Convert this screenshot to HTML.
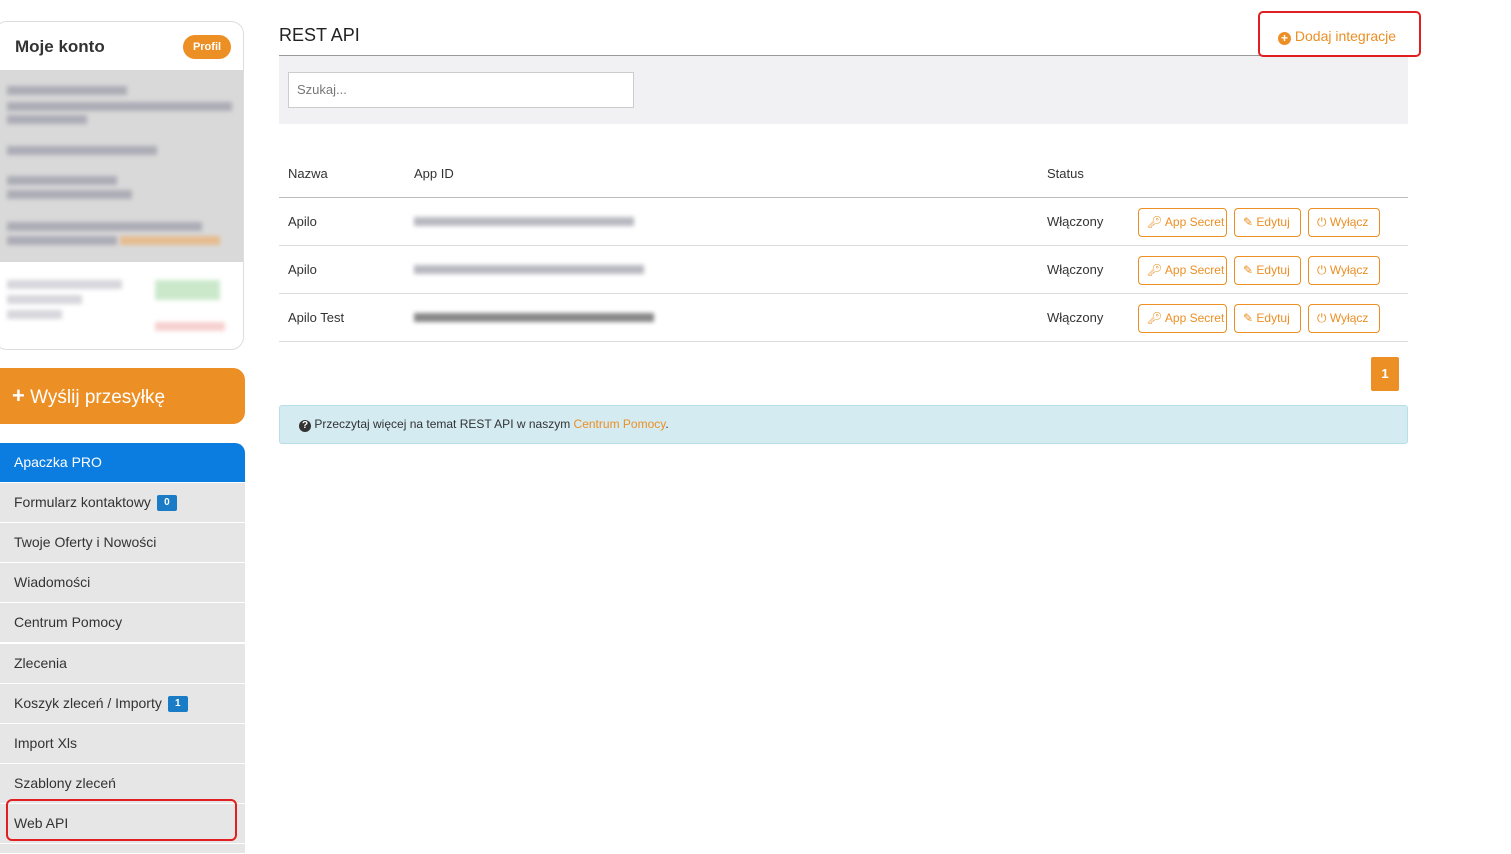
<!DOCTYPE html>
<html><head><meta charset="utf-8"><style>
*{box-sizing:border-box;margin:0;padding:0}
body{width:1511px;height:853px;background:#fff;font-family:"Liberation Sans",sans-serif;position:relative;overflow:hidden;color:#333}
.card{position:absolute;left:-6px;top:21px;width:250px;height:329px;border:1px solid #ddd;border-radius:13px;background:#fff;overflow:hidden}
.card h2{position:absolute;left:20px;top:15px;font-size:17px;font-weight:bold;color:#333}
.prof{position:absolute;left:188px;top:13px;width:48px;height:24px;border-radius:12px;background:#ec8f24;color:#fff;font-size:11px;font-weight:bold;text-align:center;line-height:24px}
.gray{position:absolute;left:0;top:48px;width:250px;height:192px;background:#d9d9d9}
.bar{position:absolute;height:9px;background:#9a9aa8;filter:blur(2px);opacity:.7}
.menu{position:absolute;left:0;width:245px;font-size:14px;color:#333}
.mi{height:40px;line-height:39px;padding-left:14px;background:#e6e6e6;border-bottom:1px solid #fff}
.badge{display:inline-block;background:#1a7cc7;color:#fff;font-size:10px;font-weight:bold;width:20px;height:16px;line-height:16px;text-align:center;border-radius:2px;margin-left:6px;vertical-align:middle}
.btn{position:absolute;height:29px;border:1px solid #ec8f24;border-radius:4px;color:#ec8f24;font-size:12px;line-height:27px;padding-left:8px;background:#fff;white-space:nowrap;overflow:hidden}
.row{position:absolute;left:279px;width:1129px;height:48px;border-bottom:1px solid #ddd;font-size:13px}
.row span{position:absolute;top:16px}
</style></head><body>
<div class="card">
<h2>Moje konto</h2><div class="prof">Profil</div>
<div class="gray">
<div class="bar" style="left:12px;top:16px;width:120px"></div>
<div class="bar" style="left:12px;top:32px;width:225px"></div>
<div class="bar" style="left:12px;top:45px;width:80px"></div>
<div class="bar" style="left:12px;top:76px;width:150px"></div>
<div class="bar" style="left:12px;top:106px;width:110px"></div>
<div class="bar" style="left:12px;top:120px;width:125px"></div>
<div class="bar" style="left:12px;top:152px;width:195px"></div>
<div class="bar" style="left:12px;top:166px;width:110px"></div>
<div class="bar" style="left:125px;top:166px;width:100px;background:#ecb070"></div>
</div>
<div class="bar" style="left:12px;top:258px;width:115px;opacity:.4"></div>
<div class="bar" style="left:12px;top:273px;width:75px;opacity:.4"></div>
<div class="bar" style="left:12px;top:288px;width:55px;opacity:.4"></div>
<div class="bar" style="left:160px;top:258px;width:65px;height:20px;background:#bfe3bf;opacity:.8"></div>
<div class="bar" style="left:160px;top:300px;width:70px;background:#f5c4c4;opacity:.8"></div>
</div>
<div style="position:absolute;left:0;top:368px;width:245px;height:56px;background:#ec8f24;border-radius:0 12px 12px 0;color:#fff;font-size:19px;line-height:56px;padding-left:12px"><b style="font-size:22px">+</b> Wyślij przesyłkę</div>
<div class="menu" style="top:443px">
<div class="mi" style="background:#0c7de0;color:#fff;border-radius:0 10px 0 0">Apaczka PRO</div>
<div class="mi">Formularz kontaktowy<span class="badge">0</span></div>
<div class="mi">Twoje Oferty i Nowości</div>
<div class="mi">Wiadomości</div>
<div class="mi">Centrum Pomocy</div>
</div>
<div class="menu" style="top:644px">
<div class="mi">Zlecenia</div>
<div class="mi">Koszyk zleceń / Importy<span class="badge">1</span></div>
<div class="mi">Import Xls</div>
<div class="mi">Szablony zleceń</div>
<div class="mi">Web API</div>
<div class="mi" style="height:10px"></div>
</div>
<div style="position:absolute;left:6px;top:799px;width:231px;height:42px;border:2px solid #e02020;border-radius:6px"></div>

<div style="position:absolute;left:279px;top:25px;font-size:18px;color:#222">REST API</div>
<div style="position:absolute;left:279px;top:55px;width:1129px;height:1px;background:#999"></div>
<div style="position:absolute;left:279px;top:56px;width:1129px;height:68px;background:#f1f1f3"></div>
<div style="position:absolute;left:1258px;top:11px;width:163px;height:46px;border:2px solid #e02020;border-radius:5px;background:#fff;color:#ec8f24;font-size:14px;line-height:46px;padding-left:18px"><span style="display:inline-block;width:13px;height:13px;border-radius:50%;background:#ec8f24;color:#fff;font-size:12px;line-height:13px;text-align:center;font-weight:bold;vertical-align:-1px">+</span> Dodaj integracje</div>
<div style="position:absolute;left:288px;top:72px;width:346px;height:36px;border:1px solid #ccc;background:#fff;font-size:13px;color:#777;line-height:34px;padding-left:8px">Szukaj...</div>
<div class="row" style="top:150px"><span style="left:9px">Nazwa</span><span style="left:135px">App ID</span><span style="left:768px">Status</span></div>
<div style="position:absolute;left:279px;top:197px;width:1129px;height:1px;background:#bbb"></div>
<div class="row" style="top:198px"><span style="left:9px">Apilo</span><span style="left:768px">Włączony</span><div class="bar" style="left:135px;top:19px;width:220px"></div></div>
<div class="row" style="top:246px"><span style="left:9px">Apilo</span><span style="left:768px">Włączony</span><div class="bar" style="left:135px;top:19px;width:230px"></div></div>
<div class="row" style="top:294px"><span style="left:9px">Apilo Test</span><span style="left:768px">Włączony</span><div class="bar" style="left:135px;top:19px;width:240px;background:#555"></div></div>
<div class="btn" style="left:1138px;top:208px;width:89px">🔑︎ App Secret</div><div class="btn" style="left:1234px;top:208px;width:67px">✎ Edytuj</div><div class="btn" style="left:1308px;top:208px;width:72px">⏻ Wyłącz</div>
<div class="btn" style="left:1138px;top:256px;width:89px">🔑︎ App Secret</div><div class="btn" style="left:1234px;top:256px;width:67px">✎ Edytuj</div><div class="btn" style="left:1308px;top:256px;width:72px">⏻ Wyłącz</div>
<div class="btn" style="left:1138px;top:304px;width:89px">🔑︎ App Secret</div><div class="btn" style="left:1234px;top:304px;width:67px">✎ Edytuj</div><div class="btn" style="left:1308px;top:304px;width:72px">⏻ Wyłącz</div>
<div style="position:absolute;left:1371px;top:357px;width:28px;height:34px;background:#ec8f24;color:#fff;font-weight:bold;font-size:13px;text-align:center;line-height:34px;border-radius:2px">1</div>
<div style="position:absolute;left:279px;top:405px;width:1129px;height:39px;background:#d3ebf1;border:1px solid #b8dfe8;border-radius:3px;font-size:12px;line-height:37px;padding-left:19px;color:#333"><span style="display:inline-block;width:12px;height:12px;border-radius:50%;background:#333;color:#fff;font-size:10px;line-height:12px;text-align:center;font-weight:bold">?</span> Przeczytaj więcej na temat REST API w naszym <span style="color:#ec8f24">Centrum Pomocy</span>.</div>
</body></html>
